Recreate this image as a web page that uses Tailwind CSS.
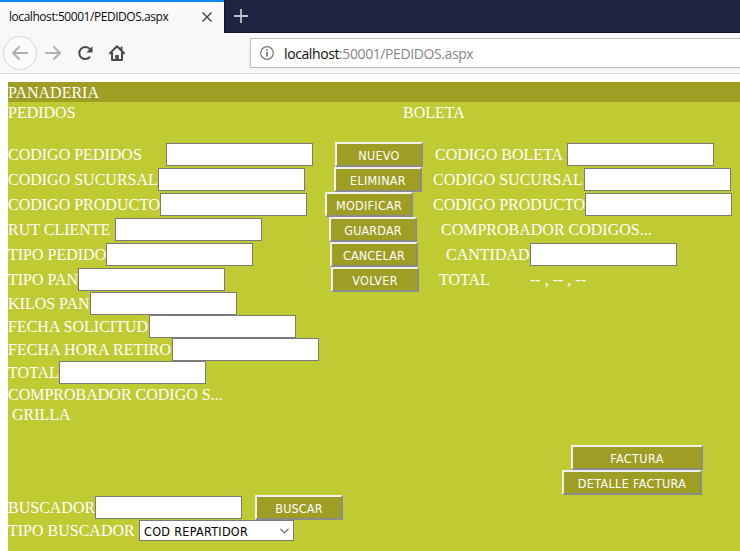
<!DOCTYPE html>
<html lang="es">
<head>
<meta charset="utf-8">
<title>PEDIDOS</title>
<script src="https://cdn.jsdelivr.net/npm/@tailwindcss/browser@4"></script>
</head>
<body class="w-[740px] h-[551px] overflow-hidden bg-white flex flex-col">
<header class="shrink-0 h-[74px] flex flex-col font-['Open_Sans','Noto_Sans',sans-serif]">
  <div class="h-[33px] flex bg-[#20233f]">
    <div class="w-[224px] h-[33px] bg-[#f9f9fa] border-t-2 border-[#0a84ff] flex items-center pl-[9px]">
      <span class="w-[192px] pb-px text-[12px] leading-[20px] tracking-[-0.45px] text-[#0c0c0d] whitespace-nowrap">localhost:50001/PEDIDOS.aspx</span>
      <svg class="w-3 h-3 mb-[2px]" viewBox="0 0 12 12" fill="none" stroke="#4a4a4d" stroke-width="1.5"><path d="M1.500 1.500l9 9M10.500 1.500l-9 9"/></svg>
    </div>
    <div class="flex-1 border-l border-b border-[#12142b] pt-2 pl-[8px]">
      <svg class="w-4 h-4" viewBox="0 0 16 16" fill="none" stroke="#c0c1cc" stroke-width="1.800"><path d="M8 1v14M1 8h14"/></svg>
    </div>
  </div>
  <div class="h-[41px] flex items-start bg-[#f8f8f8] border-b border-[#dcdcdc]">
    <div class="ml-[3px] mt-[3px] w-[34px] h-[34px] rounded-full border border-[#d8d8d8] bg-[#fbfbfb] flex items-center justify-center">
      <svg class="w-4 h-4" viewBox="0 0 16 16" fill="none" stroke="#b1b1b3" stroke-width="2" stroke-linecap="round" stroke-linejoin="round"><path d="M15 8H1.500M7 2L1 8l6 6"/></svg>
    </div>
    <svg class="ml-2 mt-3 w-4 h-4" viewBox="0 0 16 16" fill="none" stroke="#b1b1b3" stroke-width="2" stroke-linecap="round" stroke-linejoin="round"><path d="M1 8h13.500M9 2l6 6-6 6"/></svg>
    <svg class="ml-4 mt-3 w-4 h-4" viewBox="0 0 16 16" fill="none" stroke="#4a4a4c" stroke-width="2" stroke-linecap="round"><path d="M12.600 12.300A6 6 0 1 1 12.300 3.600"/><path d="M15.500 1.300v6.200h-6.200z" fill="#4a4a4c" stroke="none"/></svg>
    <svg class="ml-4 mt-3 w-4 h-4" viewBox="0 0 16 16" fill="none" stroke="#4a4a4c" stroke-width="2" stroke-linecap="round" stroke-linejoin="round"><path d="M1 8.200L8 1.200l7 7M3 8v7h10V8"/><path d="M6.200 15v-5h3.600v5z" fill="#4a4a4c" stroke="none"/><path d="M12.500 2.500v3"/></svg>
    <div class="ml-[125px] mt-[5px] flex-1 h-[30px] bg-white border border-r-0 border-[#bcbcbe] rounded-l-[2px] shadow-[0_1px_4px_rgba(0,0,0,0.05)] flex items-center pl-[9px]">
      <svg class="w-[14px] h-[14px] mr-[10px]" viewBox="0 0 14 14" fill="none" stroke="#737375" stroke-width="1.200"><circle cx="7" cy="7" r="6.300"/><path d="M7 6v4.500M7 3.300v1.500" stroke-width="1.800"/></svg>
      <span class="pt-[2px] text-[14px] leading-[20px] tracking-[-0.4px] text-[#858585] whitespace-nowrap"><span class="text-[#0c0c0d]">localhost</span>:50001/PEDIDOS.aspx</span>
    </div>
  </div>
</header>

<main class="mt-2 ml-2 flex-1 bg-[#c0ca33] text-white text-[16px] leading-[20px] font-['Liberation_Serif',serif] whitespace-nowrap">
  <div class="h-5 pt-px bg-[#9e9d24]">PANADERIA</div>
  <div class="h-10 pt-px flex"><span class="w-[395px]">PEDIDOS</span><span>BOLETA</span></div>

  <div class="h-[25px] flex items-center">
    <span class="w-[158px]">CODIGO PEDIDOS</span><input class="w-[147px] h-[23px] bg-white border border-[#7a7a7a]">
    <button class="ml-[22px] w-[88px] h-[25px] pt-[2px] bg-[#9e9d24] border-2 border-t-[#f0f0f0] border-l-[#f0f0f0] border-r-[#8b8b8b] border-b-[#8b8b8b] font-['DejaVu_Sans_Condensed','DejaVu_Sans',sans-serif] font-stretch-condensed text-[12.5px] tracking-[0.28px]">NUEVO</button>
    <span class="ml-[12px] w-[132px]">CODIGO BOLETA</span><input class="w-[147px] h-[23px] bg-white border border-[#7a7a7a]">
  </div>
  <div class="h-[25px] flex items-center">
    <span class="w-[150px]">CODIGO SUCURSAL</span><input class="w-[147px] h-[23px] bg-white border border-[#7a7a7a]">
    <button class="ml-[29px] w-[88px] h-[25px] pt-[2px] bg-[#9e9d24] border-2 border-t-[#f0f0f0] border-l-[#f0f0f0] border-r-[#8b8b8b] border-b-[#8b8b8b] font-['DejaVu_Sans_Condensed','DejaVu_Sans',sans-serif] font-stretch-condensed text-[12.5px] tracking-[0.28px]">ELIMINAR</button>
    <span class="ml-[11px] w-[151px]">CODIGO SUCURSAL</span><input class="w-[147px] h-[23px] bg-white border border-[#7a7a7a]">
  </div>
  <div class="h-[25px] flex items-center">
    <span class="w-[152px]">CODIGO PRODUCTO</span><input class="w-[147px] h-[23px] bg-white border border-[#7a7a7a]">
    <button class="ml-[18px] w-[88px] h-[25px] pt-[2px] bg-[#9e9d24] border-2 border-t-[#f0f0f0] border-l-[#f0f0f0] border-r-[#8b8b8b] border-b-[#8b8b8b] font-['DejaVu_Sans_Condensed','DejaVu_Sans',sans-serif] font-stretch-condensed text-[12.5px] tracking-[0.28px]">MODIFICAR</button>
    <span class="ml-[20px] w-[152px]">CODIGO PRODUCTO</span><input class="w-[147px] h-[23px] bg-white border border-[#7a7a7a]">
  </div>
  <div class="h-[25px] flex items-center">
    <span class="w-[107px]">RUT CLIENTE</span><input class="w-[147px] h-[23px] bg-white border border-[#7a7a7a]">
    <button class="ml-[67px] w-[88px] h-[25px] pt-[2px] bg-[#9e9d24] border-2 border-t-[#f0f0f0] border-l-[#f0f0f0] border-r-[#8b8b8b] border-b-[#8b8b8b] font-['DejaVu_Sans_Condensed','DejaVu_Sans',sans-serif] font-stretch-condensed text-[12.5px] tracking-[0.15px]">GUARDAR</button>
    <span class="ml-[24px]">COMPROBADOR CODIGOS...</span>
  </div>
  <div class="h-[25px] flex items-center">
    <span class="w-[98px]">TIPO PEDIDO</span><input class="w-[147px] h-[23px] bg-white border border-[#7a7a7a]">
    <button class="ml-[77px] w-[88px] h-[25px] pt-[2px] bg-[#9e9d24] border-2 border-t-[#f0f0f0] border-l-[#f0f0f0] border-r-[#8b8b8b] border-b-[#8b8b8b] font-['DejaVu_Sans_Condensed','DejaVu_Sans',sans-serif] font-stretch-condensed text-[12.5px] tracking-[0.1px]">CANCELAR</button>
    <span class="ml-[28px] w-[84px]">CANTIDAD</span><input class="w-[147px] h-[23px] bg-white border border-[#7a7a7a]">
  </div>
  <div class="h-[25px] flex items-center">
    <span class="w-[70px]">TIPO PAN</span><input class="w-[147px] h-[23px] bg-white border border-[#7a7a7a]">
    <button class="ml-[106px] w-[88px] h-[25px] pt-[2px] bg-[#9e9d24] border-2 border-t-[#f0f0f0] border-l-[#f0f0f0] border-r-[#8b8b8b] border-b-[#8b8b8b] font-['DejaVu_Sans_Condensed','DejaVu_Sans',sans-serif] font-stretch-condensed text-[12.5px] tracking-[0.28px]">VOLVER</button>
    <span class="ml-[20px] w-[91px]">TOTAL</span><span>-- , -- , --</span>
  </div>
  <div class="h-[23px] flex items-center"><span class="w-[82px]">KILOS PAN</span><input class="w-[147px] h-[23px] bg-white border border-[#7a7a7a]"></div>
  <div class="h-[23px] flex items-center"><span class="w-[141px]">FECHA SOLICITUD</span><input class="w-[147px] h-[23px] bg-white border border-[#7a7a7a]"></div>
  <div class="h-[23px] flex items-center"><span class="w-[164px] tracking-[0.08px]">FECHA HORA RETIRO</span><input class="w-[147px] h-[23px] bg-white border border-[#7a7a7a]"></div>
  <div class="h-[23px] flex items-center"><span class="w-[51px]">TOTAL</span><input class="w-[147px] h-[23px] bg-white border border-[#7a7a7a]"></div>
  <div class="mt-px h-5">COMPROBADOR CODIGO S...</div>
  <div class="h-5 pl-1">GRILLA</div>

  <div class="mt-5 h-[25px] flex pl-[563px]"><button class="w-[132px] h-[25px] pt-[2px] bg-[#9e9d24] border-2 border-t-[#f0f0f0] border-l-[#f0f0f0] border-r-[#8b8b8b] border-b-[#8b8b8b] font-['DejaVu_Sans_Condensed','DejaVu_Sans',sans-serif] font-stretch-condensed text-[12.5px] tracking-[0.4px]">FACTURA</button></div>
  <div class="h-[25px] flex pl-[554px]"><button class="w-[140px] h-[25px] pt-[2px] bg-[#9e9d24] border-2 border-t-[#f0f0f0] border-l-[#f0f0f0] border-r-[#8b8b8b] border-b-[#8b8b8b] font-['DejaVu_Sans_Condensed','DejaVu_Sans',sans-serif] font-stretch-condensed text-[12.5px] tracking-[0.35px]">DETALLE FACTURA</button></div>
  <div class="h-[25px] flex items-center">
    <span class="w-[87px]">BUSCADOR</span><input class="w-[147px] h-[23px] bg-white border border-[#7a7a7a]">
    <button class="ml-[13px] w-[88px] h-[25px] pt-[2px] bg-[#9e9d24] border-2 border-t-[#f0f0f0] border-l-[#f0f0f0] border-r-[#8b8b8b] border-b-[#8b8b8b] font-['DejaVu_Sans_Condensed','DejaVu_Sans',sans-serif] font-stretch-condensed text-[12.5px] tracking-[0.15px]">BUSCAR</button>
  </div>
  <div class="h-[21px] flex items-center">
    <span class="w-[131px]">TIPO BUSCADOR</span>
    <div class="w-[155px] h-[21px] bg-white border border-[#7a7a7a] flex items-center justify-between pl-1 pr-1 text-black font-['DejaVu_Sans_Condensed','DejaVu_Sans',sans-serif] font-stretch-condensed text-[12.5px] tracking-[0.3px]"><span class="pt-[2px]">COD REPARTIDOR</span><svg class="w-[9px] h-[6px]" viewBox="0 0 9 6" fill="none" stroke="#555" stroke-width="1.100"><path d="M.5.8l4 4 4-4"/></svg></div>
  </div>
</main>
</body>
</html>
